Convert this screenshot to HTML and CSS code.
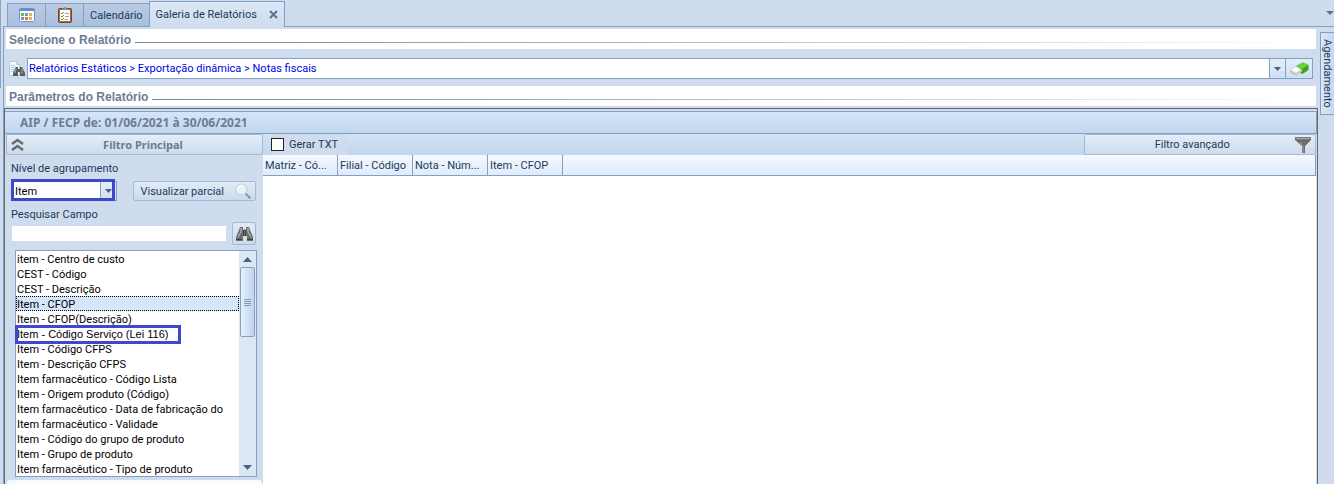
FILE: index.html
```html
<!DOCTYPE html>
<html lang="pt-br">
<head>
    <meta charset="UTF-8">
    <meta name="viewport" content="width=device-width, initial-scale=1.0">
    <title>Galeria de Relatórios</title>
    <link rel="stylesheet" href="styles.css">
</head>
<body>
    <div class="edge"></div>
    <main class="main">
        <nav class="tabs">
            <button class="tab tab-icon" aria-label="Painel">
                <svg width="16" height="14" viewBox="0 0 16 14">
                    <rect x=".5" y=".5" width="15" height="13" rx="1" fill="#fff" stroke="#6f93c4"/>
                    <rect x="1" y="1" width="14" height="2" fill="#5b8fd6"/>
                    <rect x="2" y="5" width="3" height="3" fill="#79b94c"/>
                    <rect x="6" y="5" width="3" height="3" fill="#5f9be0"/>
                    <rect x="10" y="5" width="3" height="3" fill="#f2b04a"/>
                    <rect x="2" y="9" width="3" height="3" fill="#5f9be0"/>
                    <rect x="6" y="9" width="3" height="3" fill="#e8743b"/>
                    <rect x="10" y="9" width="3" height="3" fill="#f2b04a"/>
                </svg>
            </button>
            <button class="tab tab-icon" aria-label="Tarefas">
                <svg width="14" height="16" viewBox="0 0 14 16">
                    <rect x=".5" y="1.5" width="13" height="14" rx="1" fill="#a8653a" stroke="#7c4728"/>
                    <rect x="2" y="3" width="10" height="11" fill="#fff"/>
                    <path d="M4 3V1.500h2V0h2v1.500h2V3z" fill="#8b8f96"/>
                    <path d="M3 6l1 1 2-2M3 9l1 1 2-2M3 12l1 1 2-2" fill="none" stroke="#3fa535"/>
                    <path d="M7 6.500h4M7 9.500h4M7 12.500h3" stroke="#9aa0a8"/>
                </svg>
            </button>
            <button class="tab">Calendário</button>
            <button class="tab active">Galeria de Relatórios
                <svg width="9" height="9" viewBox="0 0 9 9"><path d="M1 1l7 7M8 1L1 8" stroke="#5d7192" stroke-width="2"/></svg>
            </button>
            <svg class="tabs-more" width="8" height="4" viewBox="0 0 8 4"><path d="M0 0h8L4 4z" fill="#5d7192"/></svg>
        </nav>

        <div class="page">
            <div class="content">
                <h2 class="section-title">Selecione o Relatório</h2>
                <div class="report-row">
                    <svg width="17" height="16" viewBox="0 0 17 16">
                        <path d="M1.500.500h7l3 3v11h-10z" fill="#f2f9fd" stroke="#a5cfe3"/>
                        <path d="M8.500.500v3h3" fill="none" stroke="#a5cfe3"/>
                        <path d="M3 4.500h4M3 6.500h6M3 8.500h4M3 10.500h3" stroke="#9bd0e6"/>
                        <path d="M8 6h2v2h2V6h2l3 6v3h-5v-4h-2v4H5v-3z" fill="#5b5b5b"/>
                        <path d="M8 8l-1 4M14 8v5" stroke="#a9a9a9"/>
                    </svg>
                    <div class="combo combo-report">
                        <select aria-label="Relatório">
                            <option>Relatórios Estáticos &gt; Exportação dinâmica &gt; Notas fiscais</option>
                        </select>
                        <span class="arrow"><svg width="7" height="4" viewBox="0 0 7 4"><path d="M0 0h7L3.500 4z" fill="#4d6185"/></svg></span>
                        <button class="clear" aria-label="Limpar">
                            <svg width="19" height="13" viewBox="0 0 19 13">
                                <path d="M6 4l7-3.500 5.500 2.500v5l-6 4L7 9z" fill="#35a80e"/>
                                <path d="M6 4l7-3.500 5.500 2.500L12 7z" fill="#6fd03b"/>
                                <path d="M0 8l6-4 6 3.500v2L7 13H4L0 10z" fill="#c9c5c5"/>
                                <path d="M1 8l5-3.500 5 3L6 11z" fill="#fafafa"/>
                            </svg>
                        </button>
                    </div>
                </div>
                <h2 class="section-title">Parâmetros do Relatório</h2>

                <section class="panel">
                    <h3 class="period">AIP / FECP de: 01/06/2021 à 30/06/2021</h3>
                    <div class="columns">
                        <aside class="filter">
                            <button class="bar bar-filter">
                                <svg width="13" height="13" viewBox="0 0 13 13"><path d="M1 6l5.500-4L12 6M1 12l5.500-4L12 12" fill="none" stroke="#6c6c6c" stroke-width="2.500"/></svg>
                                <span>Filtro Principal</span>
                            </button>
                            <div class="filter-body">
                                <label for="nivel">Nível de agrupamento</label>
                                <div class="row">
                                    <div class="combo combo-level">
                                        <select id="nivel"><option>Item</option></select>
                                        <span class="arrow"><svg width="7" height="4" viewBox="0 0 7 4"><path d="M0 0h7L3.500 4z" fill="#4d6185"/></svg></span>
                                        <span class="mark mark-level"></span>
                                    </div>
                                    <button class="btn preview">
                                        <span>Visualizar parcial</span>
                                        <svg width="17" height="17" viewBox="0 0 17 17">
                                            <path d="M10.500 10.500l5 5" stroke="#8f959c" stroke-width="2"/>
                                            <circle cx="6.500" cy="6.500" r="5.500" fill="#e9f2fa" stroke="#c3c8ce"/>
                                            <path d="M3 6a4 4 0 0 1 4-3" fill="none" stroke="#fff" stroke-width="1.500"/>
                                        </svg>
                                    </button>
                                </div>
                                <label for="campo">Pesquisar Campo</label>
                                <div class="row row-search">
                                    <input type="text" id="campo">
                                    <button class="btn find" aria-label="Pesquisar">
                                        <svg width="17" height="16" viewBox="0 0 17 16">
                                            <path d="M4 1h3v3h1V3h1v1h1V1h3l1 3 3 7v4h-6v-5H7v5H0v-4l3-7z" fill="#6e6e6e"/>
                                            <path d="M5 2v4l-3 5M12 2v4l3 5" fill="none" stroke="#c4c4c4"/>
                                            <path d="M7.500 4v6M9.500 4v6M0 13.500h6M11 13.500h6" stroke="#3c3c3c"/>
                                        </svg>
                                    </button>
                                </div>
                                <div class="list">
                                    <select size="15" aria-label="Campos">
                                        <option>item - Centro de custo</option>
                                        <option>CEST - Código</option>
                                        <option>CEST - Descrição</option>
                                        <option selected>Item - CFOP</option>
                                        <option>Item - CFOP(Descrição)</option>
                                        <option class="service">Item - Código Serviço (Lei 116)</option>
                                        <option>Item - Código CFPS</option>
                                        <option>Item - Descrição CFPS</option>
                                        <option>Item farmacêutico - Código Lista</option>
                                        <option>Item - Origem produto (Código)</option>
                                        <option>Item farmacêutico - Data de fabricação do</option>
                                        <option>Item farmacêutico - Validade</option>
                                        <option>Item - Código do grupo de produto</option>
                                        <option>Item - Grupo de produto</option>
                                        <option>Item farmacêutico - Tipo de produto</option>
                                    </select>
                                    <div class="scroll">
                                        <svg width="9" height="5" viewBox="0 0 9 5"><path d="M0 5h9L4.500 0z" fill="#4d6185"/></svg>
                                        <span class="thumb"><svg width="7" height="7" viewBox="0 0 7 7"><path d="M0 .500h7M0 2.500h7M0 4.500h7M0 6.500h7" stroke="#7f98bd"/></svg></span>
                                        <svg width="9" height="5" viewBox="0 0 9 5"><path d="M0 0h9L4.500 5z" fill="#4d6185"/></svg>
                                    </div>
                                    <span class="mark mark-service"></span>
                                </div>
                            </div>
                            <div class="next"></div>
                        </aside>

                        <div class="result">
                            <div class="toolbar">
                                <label class="check"><input type="checkbox">Gerar TXT</label>
                                <button class="bar bar-advanced">
                                    <span>Filtro avançado</span>
                                    <svg width="16" height="16" viewBox="0 0 16 16">
                                        <path d="M0 1h16v2l-6 6v7H7V9L0 3z" fill="#6b6b6b"/>
                                        <path d="M0 0h16v3H0z" fill="#777"/>
                                        <path d="M1 1.500h14" stroke="#aaa"/>
                                        <path d="M5 5l3 4v7" fill="none" stroke="#a4a4a4"/>
                                    </svg>
                                </button>
                            </div>
                            <table class="grid">
                                <thead>
                                    <tr>
                                        <th>Matriz - Có...</th>
                                        <th>Filial - Código</th>
                                        <th>Nota - Núm...</th>
                                        <th>Item - CFOP</th>
                                        <th class="rest"></th>
                                    </tr>
                                </thead>
                            </table>
                        </div>
                    </div>
                </section>
            </div>
            <button class="side-tab">Agendamento</button>
        </div>
    </main>
</body>
</html>
```
FILE: styles.css
```css
* {
    box-sizing: border-box;
}

body {
    margin: 0;
    height: 100vh;
    display: flex;
    overflow: hidden;
    background-color: #cfdcee;
    color: #1e395b;
    font-family: Tahoma, Roboto, sans-serif;
    font-size: 11px;
    line-height: 15px;
}

button, input, select {
    font: inherit;
    color: inherit;
    margin: 0;
    padding: 0;
    border: none;
    border-radius: 0;
    outline: none;
}

select {
    appearance: none;
}

svg {
    display: block;
    flex: none;
}

h2, h3 {
    margin: 0;
}

.edge {
    width: 1px;
    height: 88px;
    margin-right: 2px;
    background-color: #8aa3c7;
}

.main {
    flex: 1;
    min-width: 0;
    display: flex;
    flex-direction: column;
}

/* tabs */
.tabs {
    display: flex;
    align-items: flex-end;
    height: 27px;
    padding-left: 4px;
    border-bottom: 1px solid #849fc4;
}

.tab {
    display: flex;
    align-items: center;
    justify-content: center;
    height: 23px;
    padding: 0 6px;
    border: 1px solid #849fc4;
    border-bottom: none;
    margin-right: -1px;
    background: linear-gradient(#b9cbe5, #a9bfdd);
    white-space: nowrap;
}

.tab-icon {
    width: 39px;
}

.tab.active {
    height: 26px;
    gap: 12px;
    margin-bottom: -1px;
    background: linear-gradient(#dce8f7, #cfdcee);
}

.tabs-more {
    margin: auto 0 11px auto;
}

.page {
    flex: 1;
    min-height: 0;
    display: flex;
}

.content {
    flex: 1;
    min-width: 0;
    display: flex;
    flex-direction: column;
    border-left: 1px solid #849fc4;
    padding-top: 2px;
}

.section-title {
    display: flex;
    align-items: center;
    gap: 4px;
    height: 20px;
    margin: 0 2px;
    padding: 2px 3px 0;
    background-color: #fff;
    color: #6b7c93;
    font: bold 12px/18px "Liberation Sans", Arial, sans-serif;
}

.section-title::after {
    content: "";
    flex: 1;
    height: 1px;
    margin-top: 4px;
    background: linear-gradient(to right, #74869f, #d5d5d5 70%, #fff);
}

.report-row {
    display: flex;
    align-items: center;
    gap: 2px;
    padding: 9px 5px 7px 4px;
}

.combo {
    position: relative;
    display: flex;
    height: 21px;
    border: 1px solid #849fc4;
    background-color: #fff;
}

.combo select {
    flex: 1;
    min-width: 0;
    padding-left: 1px;
    background-color: #fff;
}

.arrow, .clear {
    display: flex;
    align-items: center;
    justify-content: center;
    width: 16px;
    border-left: 1px solid #849fc4;
    background: linear-gradient(#e3eefa, #cfdff2);
}

.clear {
    width: 27px;
}

.combo-report {
    flex: 1;
}

.combo-report select {
    color: #0000e6;
}

/* parameters */
.panel {
    flex: 1;
    min-height: 0;
    display: flex;
    flex-direction: column;
    margin-top: 2px;
    padding-top: 2px;
    border: solid #666;
    border-width: 1px 1px 0;
}

.period {
    height: 23px;
    padding-left: 15px;
    border: 1px solid #849fc4;
    border-left: none;
    background: linear-gradient(#d5e5f7, #c1d6ee);
    color: #6b7c93;
    font: bold 12px/21px Tahoma, "Noto Sans", sans-serif;
}

.columns {
    flex: 1;
    min-height: 0;
    display: flex;
    padding: 0 1px;
}

.filter {
    width: 257px;
    display: flex;
    flex-direction: column;
}

.bar {
    display: flex;
    align-items: center;
    height: 21px;
    padding: 0 4px;
    border: 1px solid #a6b9d4;
    border-radius: 2px;
    background: linear-gradient(#e3edf8, #cddbec);
}

.bar span {
    flex: 1;
    text-align: center;
}

.bar-filter {
    padding-right: 0;
    color: #6b7c93;
    font: bold 11px/15px Tahoma, "Noto Sans", sans-serif;
}

.filter-body {
    display: flex;
    flex-direction: column;
    padding: 6px 6px 3px 5px;
}

.row {
    display: flex;
    justify-content: space-between;
    padding: 5px 1px 6px 0;
}

.row-search {
    align-items: center;
    padding: 0 1px 4px;
}

.row-search input {
    width: 214px;
    height: 15px;
    background-color: #fff;
}

.combo-level {
    width: 106px;
    height: 20px;
    color: #000;
}

.combo-level select {
    padding-left: 3px;
}

.btn {
    display: flex;
    align-items: center;
    justify-content: center;
    border: 1px solid #a6b9d4;
    border-radius: 2px;
    background: linear-gradient(#e1ebf7, #cbdaec);
}

.preview {
    width: 123px;
    height: 20px;
    justify-content: flex-end;
    gap: 11px;
    padding-right: 3px;
}

.find {
    width: 24px;
    height: 23px;
}

.list {
    position: relative;
    display: flex;
    height: 227px;
    margin: 1px 0 0 4px;
    border: 1px solid #849fc4;
    background-color: #fff;
}

.list select {
    flex: 1;
    min-width: 0;
    overflow: hidden;
    background-color: #fff;
    color: #000;
}

.list option {
    height: 15px;
    min-height: 15px;
    padding: 2px 1px 0;
    line-height: 13px;
}

.list option:checked {
    background: linear-gradient(#d5e6fb, #d5e6fb);
    color: #000;
    outline: 1px dotted #000;
    outline-offset: -1px;
}

.list .service {
    font-family: "Liberation Sans", Arial, sans-serif;
}

.scroll {
    width: 17px;
    display: flex;
    flex-direction: column;
    align-items: center;
    padding: 6px 0;
    background-color: #dce7f4;
}

.scroll > svg:last-child {
    margin-top: auto;
}

.thumb {
    display: flex;
    align-items: center;
    justify-content: center;
    width: 15px;
    height: 70px;
    margin-top: 5px;
    border: 1px solid #849fc4;
    border-radius: 2px;
    background: linear-gradient(to right, #e6f0fb, #bfd3ec);
}

/* highlight frames laid over the controls */
.mark {
    position: absolute;
    border: 3px solid #3f48cc;
    pointer-events: none;
}

.mark-level {
    top: -3px;
    left: -1px;
    width: 104px;
    height: 22px;
}

.mark-service {
    top: 74px;
    left: -1px;
    width: 166px;
    height: 19px;
}

.next {
    flex: 1;
    margin: 0 1px;
    border-radius: 3px 3px 0 0;
    background-color: #f7faff;
}

.result {
    flex: 1;
    min-width: 0;
    background-color: #fff;
}

.toolbar {
    display: flex;
    justify-content: space-between;
    background: linear-gradient(#d3e3f6, #c1d6ee);
}

.check {
    display: flex;
    align-items: center;
    gap: 5px;
    margin-left: 8px;
    padding-right: 8px;
    background-color: #cfdcee;
}

.check input {
    appearance: none;
    width: 13px;
    height: 13px;
    border: 1px solid #222;
    background-color: #fff;
}

.bar-advanced {
    width: 22%;
}

.grid {
    width: 100%;
    table-layout: fixed;
    border-spacing: 0;
    background: linear-gradient(#f5f9ff, #deeafa);
}

.grid th {
    width: 75px;
    height: 21px;
    padding: 0 2px;
    border: 1px solid #849fc4;
    border-width: 0 1px 1px 0;
    font-weight: normal;
    text-align: left;
    white-space: nowrap;
}

.grid .rest {
    width: auto;
}

.side-tab {
    align-self: flex-start;
    width: 14px;
    height: 83px;
    margin: 5px 0 0 2px;
    border: 1px solid #849fc4;
    border-right: none;
    background: linear-gradient(to right, #d9e7f7, #c6d8ee);
    writing-mode: vertical-rl;
    line-height: 13px;
    white-space: nowrap;
}
```
